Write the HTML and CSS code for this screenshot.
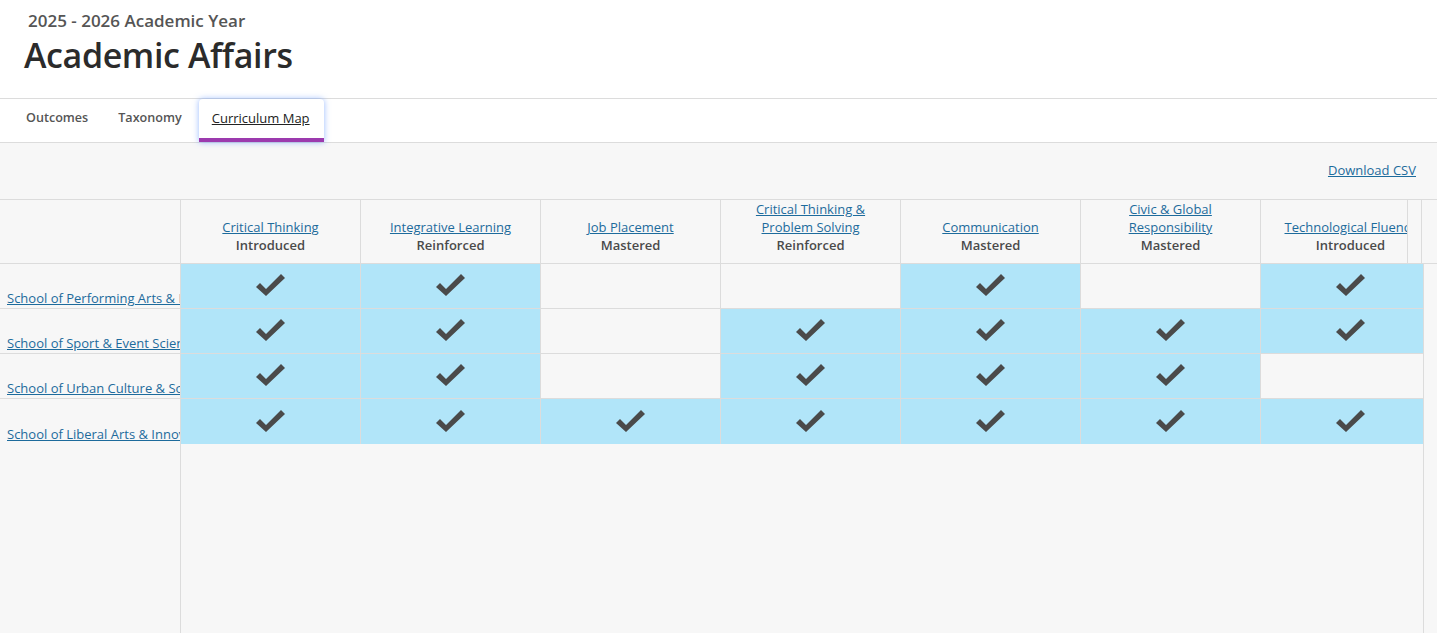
FILE: index.html
```html
<!DOCTYPE html>
<html lang="en">

<head>
  <meta charset="UTF-8">
  <meta name="viewport" content="width=device-width, initial-scale=1.0">
  <title>Curriculum Map</title>
  <link rel="stylesheet" href="styles.css">
</head>

<body>
  <svg class="sprites" xmlns="http://www.w3.org/2000/svg">
    <symbol id="check" viewBox="0 0 29 22">
      <polygon points="0,13 4,9 10,15 25,0 29,4 10,22" />
    </symbol>
  </svg>

  <div class="page">
    <header class="page-header">
      <div class="year">2025 - 2026 Academic Year</div>
      <h1>Academic Affairs</h1>
    </header>

    <nav class="tabs">
      <a class="tab">Outcomes</a>
      <a class="tab">Taxonomy</a>
      <a class="tab active">Curriculum Map</a>
    </nav>

    <div class="toolbar">
      <a class="download" href="#">Download CSV</a>
    </div>

    <div class="map">
      <div class="map-head">
        <div class="corner"></div>
        <div class="head-scroll">
          <div class="head-row" id="headRow"></div>
        </div>
        <div class="head-gutter"></div>
      </div>

      <div class="map-body">
        <div class="labels" id="labels"></div>
        <div class="body-scroll" id="bodyRows"></div>
      </div>
    </div>
  </div>

  <script>
    const outcomes = [
      { name: 'Critical Thinking', level: 'Introduced' },
      { name: 'Integrative Learning', level: 'Reinforced' },
      { name: 'Job Placement', level: 'Mastered' },
      { name: 'Critical Thinking & Problem Solving', level: 'Reinforced' },
      { name: 'Communication', level: 'Mastered' },
      { name: 'Civic & Global Responsibility', level: 'Mastered' },
      { name: 'Technological Fluency', level: 'Introduced' }
    ];

    const schools = [
      { name: 'School of Performing Arts & Media', map: [1, 1, 0, 0, 1, 0, 1] },
      { name: 'School of Sport & Event Science', map: [1, 1, 0, 1, 1, 1, 1] },
      { name: 'School of Urban Culture & Society', map: [1, 1, 0, 1, 1, 1, 0] },
      { name: 'School of Liberal Arts & Innovation', map: [1, 1, 1, 1, 1, 1, 1] }
    ];

    const headRow = document.getElementById('headRow');
    outcomes.forEach(o => {
      const cell = document.createElement('div');
      cell.className = 'head-cell';
      cell.innerHTML = `
        <a href="#">${o.name.replace('&', '&amp;')}</a>
        <span class="level">${o.level}</span>
      `;
      headRow.appendChild(cell);
    });

    const labels = document.getElementById('labels');
    const bodyRows = document.getElementById('bodyRows');
    schools.forEach(s => {
      const label = document.createElement('div');
      label.className = 'label';
      label.innerHTML = `<a href="#">${s.name.replace('&', '&amp;')}</a>`;
      labels.appendChild(label);

      const row = document.createElement('div');
      row.className = 'map-row';
      s.map.forEach(on => {
        const cell = document.createElement('div');
        cell.className = on ? 'map-cell on' : 'map-cell';
        if (on) {
          cell.innerHTML = '<svg class="check"><use href="#check"></use></svg>';
        }
        row.appendChild(cell);
      });
      bodyRows.appendChild(row);
    });
  </script>
</body>

</html>
```

FILE: styles.css
```css
html,
body {
  height: 100%;
}

body {
  margin: 0;
  font-family: "Open Sans", Arial, sans-serif;
  color: #333;
  background-color: #f7f7f7;
  overflow: hidden;
}

a {
  color: #1d6b9c;
  text-decoration: underline;
}

.sprites {
  display: none;
}

.page {
  display: flex;
  flex-direction: column;
  height: 100%;
}

/* title block */
.page-header {
  height: 99px;
  box-sizing: border-box;
  padding: 9px 0 0 24px;
  background-color: #fff;
  border-bottom: 1px solid #dcdcdc;
}

.year {
  margin-left: 4px;
  font-size: 17px;
  line-height: 24px;
  font-weight: 600;
  color: #555;
}

.page-header h1 {
  margin: 1px 0 0;
  font-size: 34px;
  line-height: 42px;
  font-weight: 600;
  color: #2b2b2b;
  letter-spacing: -0.4px;
}

/* tabs */
.tabs {
  display: flex;
  gap: 2px;
  height: 44px;
  box-sizing: border-box;
  padding-left: 12px;
  background-color: #fff;
  border-bottom: 1px solid #dcdcdc;
}

.tab {
  padding: 10px 14px 0;
  font-size: 12.6px;
  line-height: 18px;
  font-weight: 600;
  color: #555;
  text-decoration: none;
}

.tab.active {
  margin-left: 1px;
  padding-left: 13px;
  padding-right: 14px;
  font-size: 13px;
  color: #222;
  font-weight: 500;
  text-decoration: underline;
  border-radius: 4px 4px 0 0;
  border-bottom: 4px solid #9c3aae;
  box-shadow: 0 0 6px rgba(70, 130, 255, 0.55);
}

/* download link */
.toolbar {
  display: flex;
  justify-content: flex-end;
  height: 56px;
  box-sizing: border-box;
  padding: 18px 21px 0 0;
}

.download {
  font-size: 13px;
  line-height: 18px;
}

/* curriculum grid */
.map {
  flex: 1;
  display: flex;
  flex-direction: column;
  border-top: 1px solid #dcdcdc;
  min-height: 0;
}

.map-head {
  display: flex;
  height: 64px;
  border-bottom: 1px solid #dcdcdc;
  box-sizing: border-box;
}

.corner {
  width: 181px;
  flex-shrink: 0;
  box-sizing: border-box;
  border-right: 1px solid #dcdcdc;
}

.head-scroll {
  width: 1227px;
  flex-shrink: 0;
  box-sizing: border-box;
  overflow: hidden;
  border-right: 1px solid #dcdcdc;
}

.head-gutter {
  width: 14px;
  flex-shrink: 0;
  box-sizing: border-box;
  border-right: 1px solid #dcdcdc;
}

.head-row {
  display: flex;
  height: 100%;
}

.head-cell {
  width: 180px;
  flex-shrink: 0;
  box-sizing: border-box;
  display: flex;
  flex-direction: column;
  justify-content: flex-end;
  align-items: center;
  padding: 0 16px 9px;
  border-right: 1px solid #dcdcdc;
  text-align: center;
  font-size: 13px;
  line-height: 18px;
}

.head-cell a {
  white-space: normal;
}

.head-cell .level {
  font-weight: 600;
  color: #4a4a4a;
  white-space: nowrap;
}

.map-body {
  flex: 1;
  display: flex;
  min-height: 0;
}

.labels {
  width: 181px;
  flex-shrink: 0;
  box-sizing: border-box;
  border-right: 1px solid #dcdcdc;
}

.label {
  height: 45px;
  box-sizing: border-box;
  display: flex;
  align-items: flex-end;
  padding: 0 0 1px 7px;
  overflow: hidden;
  white-space: nowrap;
  font-size: 13px;
  line-height: 18px;
  border-bottom: 1px solid #dcdcdc;
}

.label:last-child,
.map-row:last-child {
  border-bottom: none;
}

.body-scroll {
  width: 1243px;
  flex-shrink: 0;
  box-sizing: border-box;
  overflow: hidden;
  border-right: 1px solid #dcdcdc;
}

.map-row {
  display: flex;
  height: 45px;
  box-sizing: border-box;
  border-bottom: 1px solid #dcdcdc;
}

.map-cell {
  width: 180px;
  flex-shrink: 0;
  box-sizing: border-box;
  display: flex;
  align-items: center;
  justify-content: center;
  border-right: 1px solid #dcdcdc;
}

.map-cell.on {
  background-color: #b1e5f9;
}

.check {
  width: 29px;
  height: 22px;
  margin-top: -2px;
  fill: #4a4a4a;
}
```
